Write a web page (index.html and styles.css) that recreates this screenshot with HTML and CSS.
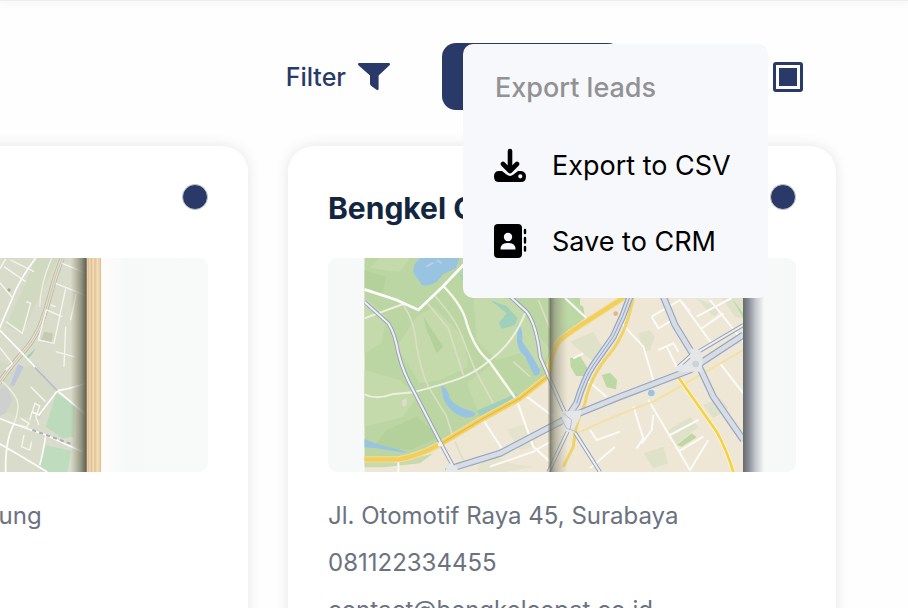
FILE: index.html
```html
<!DOCTYPE html>
<html lang="en">
<head>
  <meta charset="UTF-8">
  <meta name="viewport" content="width=device-width, initial-scale=1.0">
  <title>Leads</title>
  <link rel="stylesheet" href="styles.css">
</head>
<body>

  <header class="topbar"></header>

  <div class="toolbar">
    <button class="filter" type="button">
      Filter
      <svg width="32" height="28" viewBox="0 0 32 28" fill="currentColor" aria-hidden="true">
        <path d="M1 0H31Q32 0 32 1.2Q32 2 31 2.8L20.6 12.4V25.5Q20.6 28 18.6 26.8L13 22.8Q12 22 12 20.8V12.4L1 2.8Q0 2 0 1.2Q0 0 1 0Z"/>
      </svg>
    </button>

    <div class="export">
      <button class="export-button" type="button" aria-label="Export leads"></button>
      <div class="menu">
        <h2 class="menu-title">Export leads</h2>
        <button class="menu-item" type="button">
          <svg width="34" height="36" viewBox="0 0 34 36" aria-hidden="true">
            <path d="M17 3V20M10 16L17 23L24 16" fill="none" stroke="#000" stroke-width="4.6" stroke-linecap="round" stroke-linejoin="round"/>
            <path fill-rule="evenodd" d="M6 23H9L13.5 26.6Q17 29.2 20.5 26.6L25 23H28Q33 23.6 33 28.5Q33 34 28 34H6Q1 34 1 28.5Q1 23 6 23ZM27.3 26.2A2.1 2.1 0 1 0 27.3 30.4A2.1 2.1 0 1 0 27.3 26.2Z"/>
          </svg>
          Export to CSV
        </button>
        <button class="menu-item" type="button">
          <svg width="34" height="36" viewBox="0 0 34 36" aria-hidden="true">
            <rect x="1" y="0" width="28" height="34" rx="4"/>
            <circle cx="15" cy="13" r="4.2" fill="#f7f8fb"/>
            <path d="M7.5 25.5Q7.5 19 14 19H16Q22.5 19 22.5 25.5Z" fill="#f7f8fb"/>
            <path d="M32 6V9M32 14V18.5M32 23V26.5" stroke="#000" stroke-width="2.4" stroke-linecap="round"/>
          </svg>
          Save to CRM
        </button>
      </div>
    </div>

    <input class="select-all" type="checkbox" aria-label="Select all" checked>
  </div>

  <main class="cards">
    <article class="card">
      <div class="card-head">
        <h3 class="card-title"></h3>
        <input class="dot" type="checkbox" aria-label="Select lead" checked>
      </div>
      <svg class="map" viewBox="-777 384 1404 642" preserveAspectRatio="xMaxYMid slice" aria-hidden="true">
        <defs>
          <linearGradient id="fold">
            <stop offset="0" stop-color="#8a8b78" stop-opacity="0"/>
            <stop offset=".45" stop-color="#85866f" stop-opacity=".55"/>
            <stop offset="1" stop-color="#57564b"/>
          </linearGradient>
          <linearGradient id="wall">
            <stop offset="0" stop-color="#fdfcfb"/>
            <stop offset=".25" stop-color="#f7f9f9"/>
            <stop offset="1" stop-color="#f8f9f9"/>
          </linearGradient>
        </defs>
        <rect x="-777" y="384" width="1041" height="642" fill="#d9dcca"/>
        <path d="M110 384H180L120 500L70 610L20 590L75 470Z" fill="#d1d9c1"/>
        <path d="M0 690L60 720L110 700L175 780L120 870L60 860L0 840Z" fill="#d3d9c5"/>
        <path d="M0 780L22 765L40 810L20 850L0 860Z" fill="#ced0d0"/>
        <path d="M172 790L228 825L225 920L190 925L140 890Z" fill="#bedabd"/>
        <path d="M138 945L217 962L205 1026H140L120 1000Z" fill="#bfdcbf"/>
        <path d="M57 702L74 710L45 768L33 766Z" fill="#bfc7dc"/>
        <path d="M78 684L110 655L100 672L84 690Z" fill="#a5ceb1"/>
        <path d="M135 605L162 610L158 637L126 630Z" fill="#c7c9b2"/>
        <circle cx="30" cy="480" r="5" fill="#a9aa94"/>
        <path d="M190 384C140 500 150 590 60 680C40 705 15 735 0 760" fill="none" stroke="#bdb9a2" stroke-width="15"/>
        <path d="M190 384C140 500 150 590 60 680C40 705 15 735 0 760" fill="none" stroke="#e2e0d2" stroke-width="10"/>
        <path d="M190 384C140 500 150 590 60 680C40 705 15 735 0 760" fill="none" stroke="#b9b59e" stroke-width="2"/>
        <path d="M158 384Q125 460 122 530M10 755Q60 800 57 830Q55 860 45 880" fill="none" stroke="#f0efe5" stroke-width="4"/>
        <g fill="none" stroke="#fdfdfb" stroke-width="5">
          <path d="M110 384Q60 450 40 505L0 598L65 665L175 782L262 855"/>
          <path d="M175 782Q220 775 262 758M175 782L120 855L98 845"/>
          <path d="M0 865L45 882L140 915L250 965M45 882Q18 930 20 1026M0 940L60 975L145 1026M140 920Q130 980 122 1005"/>
        </g>
        <g fill="none" stroke="#f6f6f0" stroke-width="4">
          <path d="M0 420L20 387M35 390L105 425M15 410L80 455M0 455L42 505M170 460L262 497M190 400L262 430"/>
          <path d="M200 475L165 640L118 630L142 540L190 560M232 490L215 570M22 575L70 610L95 520L82 515M155 525L170 530"/>
          <path d="M95 770L140 815M0 650L40 700L20 720M75 915L68 950L92 960L98 935M92 870L108 820L122 828L110 860L120 885M65 865L90 880L82 892L62 885"/>
          <path d="M200 590L195 710M170 665L225 680"/>
        </g>
        <path d="M108 712L175 782" stroke="#b9bbc8" stroke-width="6"/>
        <path d="M100 900L225 945" stroke="#a9adba" stroke-width="6" stroke-dasharray="12 10"/>
        <rect x="215" y="384" width="49" height="642" fill="url(#fold)"/>
        <rect x="263" y="384" width="44" height="642" fill="#ecd3ab"/>
        <path d="M268 384V1026M278 384V1026M288 384V1026M304 384V1026" stroke="#e0bd92" stroke-width="3"/>
        <path d="M283 384V1026M296 384V1026" stroke="#f3dfbd" stroke-width="3"/>
        <rect x="307" y="384" width="320" height="642" fill="url(#wall)"/>
      </svg>
      <p class="line">Jl. Asia Afrika 10, Bandung</p>
    </article>

    <article class="card">
      <div class="card-head">
        <h3 class="card-title">Bengkel Cepat</h3>
        <input class="dot" type="checkbox" aria-label="Select lead" checked>
      </div>
      <svg class="map" viewBox="24 24 1404 642" preserveAspectRatio="xMaxYMid slice" aria-hidden="true">
        <defs>
          <linearGradient id="spine">
            <stop offset="0" stop-color="#77775f" stop-opacity=".15"/>
            <stop offset=".12" stop-color="#66655a" stop-opacity=".8"/>
            <stop offset=".35" stop-color="#8b8976" stop-opacity=".55"/>
            <stop offset="1" stop-color="#a8a68d" stop-opacity="0"/>
          </linearGradient>
          <linearGradient id="shade">
            <stop offset="0" stop-color="#666b6c"/>
            <stop offset=".25" stop-color="#878b95"/>
            <stop offset=".6" stop-color="#c6c9cd"/>
            <stop offset="1" stop-color="#f7f9f9"/>
          </linearGradient>
          <clipPath id="sheet"><rect x="133" y="24" width="1137" height="642"/></clipPath>
        </defs>
        <rect x="24" y="24" width="1404" height="642" fill="#f7f9f9"/>
        <g clip-path="url(#sheet)">
          <rect x="133" y="24" width="1137" height="642" fill="#eee7d6"/>
          <path d="M133 24H780V225Q715 260 700 310L685 378L600 440L490 500L360 583Q280 625 235 628H133Z" fill="#bbd6a2"/>
          <g fill="#c5daaa">
            <path d="M133 140L200 200L185 280L133 310ZM230 290L290 200L340 170L430 260L445 350L360 390L300 400ZM460 130L580 150L690 300L650 370L600 310L530 330L470 270Z"/>
            <path d="M133 360L240 390L290 440L250 500L133 530ZM440 400L520 340L590 440L480 500ZM180 24H270L240 65L150 55Z"/>
          </g>
          <path d="M133 60L200 80L185 130L133 115ZM310 200L370 290L350 310L320 240ZM290 500L360 560L270 600L160 590L200 540Z" fill="#b4d19c"/>
          <path d="M133 628L235 638L340 610L300 640L190 652H133Z" fill="#c7d9ad"/>
          <path d="M470 655L510 610L570 640L640 650L560 666H480ZM560 540L620 520L650 590L600 600Z" fill="#e5e3cd"/>
          <path d="M282 45L300 24H418L408 55L370 72L350 96Q320 112 306 105L280 68ZM593 222Q610 230 607 275Q640 320 660 360Q660 380 642 375L615 320Q590 300 591 265ZM363 408Q380 405 390 445Q405 472 462 485Q475 500 438 503Q390 492 370 445ZM133 567L165 580L250 602L262 610L170 595L133 592Z" fill="#98c4e2"/>
          <path d="M536 220L560 190L510 150L560 168L592 205L585 225L545 237ZM470 482L590 430L597 440L480 498ZM415 66L430 80L428 92Z" fill="#a0cfbb"/>
          <path d="M318 50L340 38M350 30L365 40" stroke="#c7cde1" stroke-width="5"/>
          <path d="M728 130L790 170L795 205Q760 235 720 225ZM750 325L780 318L803 355L796 378H768L752 350ZM845 375L870 368L891 390L888 418L860 412Z" fill="#bcd8a4"/>
          <path d="M750 275L820 245L855 305L830 340L800 320ZM955 250L990 240L1005 260L990 300L970 305ZM1045 540L1110 500L1135 530L1060 590ZM1150 465L1200 445L1225 475L1180 505ZM970 610L1030 590L1045 640L1000 655ZM1205 144H1270V205L1245 200ZM1130 144L1200 175L1185 200L1165 185Z" fill="#dfe1c8"/>
          <path d="M1070 585L1115 550L1130 562L1085 590ZM1235 144L1270 190V205Z" fill="#bed8a2"/>

          <!-- footpaths in the park -->
          <g fill="none" stroke="#dcdec6" stroke-width="5">
            <path d="M250 165Q285 215 290 290Q305 370 325 410L380 500L400 565"/>
            <path d="M322 160L385 235L430 375M345 138Q410 210 430 270L465 360L520 460M655 150L690 235"/>
            <path d="M580 335L630 380M405 575L430 630"/>
          </g>
          <g fill="none" stroke="#eeefe3" stroke-width="6">
            <path d="M133 205L250 162M133 433Q170 450 215 433L280 427Q380 400 420 385Q470 365 507 333Q580 280 615 190"/>
          </g>
          <path d="M133 118L230 150L295 180L370 108L450 24" fill="none" stroke="#fff" stroke-width="8"/>
          <path d="M370 108Q430 170 440 220Q465 300 507 333L590 450L640 590L690 635" fill="none" stroke="#fbfbf4" stroke-width="7"/>

          <!-- minor streets -->
          <g fill="none" stroke="#fbfaf8" stroke-width="6">
            <path d="M490 510L555 610M510 650L640 605L700 570M620 440L700 500M235 635V666"/>
            <path d="M905 220L970 290L1000 390M985 450L1110 660L1165 570M1050 555L1135 510M1075 605L1150 560M940 470L970 565L950 595M1000 495L995 540L965 580"/>
            <path d="M735 144L800 205M760 325L790 310M800 390L860 440M810 540L830 570L900 545M885 590L810 655"/>
            <path d="M995 200L1080 150L1110 185M995 200L1015 235L1065 205M1080 150L1175 280M1130 200L1235 144M1145 235L1210 190M1170 150L1270 275M1200 340L1270 430M1015 300L1060 280L1075 305M1070 350L1040 290"/>
          </g>

          <!-- yellow roads -->
          <g fill="none" stroke-linejoin="round">
            <path d="M133 628H235Q290 620 360 583L490 505L600 445L685 378Q695 300 720 270L760 240L900 150L940 120" stroke="#eedda8" stroke-width="19"/>
            <path d="M133 628H235Q290 620 360 583L490 505L600 445L685 378Q695 300 720 270L760 240L900 150L940 120" stroke="#f4cf55" stroke-width="13"/>
            <path d="M360 583L490 505L600 445L685 378" stroke="#e5b343" stroke-width="3"/>
            <path d="M940 140Q920 250 870 310Q810 380 795 460Q765 520 760 590L730 650" stroke="#f1d264" stroke-width="9"/>
            <path d="M775 548Q900 490 1000 455L1150 370L1270 300" stroke="#f3e1a0" stroke-width="6"/>
            <path d="M1070 375L1130 460L1190 545Q1220 600 1240 666" stroke="#fff6c9" stroke-width="13"/>
            <path d="M1070 375L1130 460L1190 545Q1220 600 1240 666" stroke="#f2d14e" stroke-width="8"/>
          </g>

          <!-- main roads -->
          <g fill="none" stroke="#93a5c6" stroke-width="21" stroke-linejoin="round">
            <path d="M380 666L410 650L540 610L740 505L900 440L1110 360L1270 255"/>
            <path d="M740 505L770 460Q795 380 820 345L880 260Q910 200 930 140"/>
            <path d="M1030 140L1065 225L1120 315L1145 365L1180 440L1270 570"/>
          </g>
          <g fill="none" stroke="#d8dce3" stroke-width="14" stroke-linejoin="round">
            <path d="M380 666L410 650L540 610L740 505L900 440L1110 360L1270 255"/>
            <path d="M740 505L770 460Q795 380 820 345L880 260Q910 200 930 140"/>
            <path d="M1030 140L1065 225L1120 315L1145 365L1180 440L1270 570"/>
          </g>
          <path d="M770 460Q795 380 820 345L880 260Q910 200 930 140" fill="none" stroke="#93a5c6" stroke-width="3"/>
          <g fill="none" stroke="#98a3bb" stroke-width="12">
            <path d="M133 155L205 220Q225 250 235 310Q250 370 283 427L365 585L400 650M560 130L620 185Q650 225 660 320L685 378L740 500M745 540L685 666M765 548L840 666"/>
            <path d="M1110 320L1270 225M1075 350L1120 310"/>
          </g>
          <g fill="none" stroke="#eef0f2" stroke-width="6">
            <path d="M133 155L205 220Q225 250 235 310Q250 370 283 427L365 585L400 650M560 130L620 185Q650 225 660 320L685 378L740 500M745 540L685 666M765 548L840 666"/>
            <path d="M1110 320L1270 225M1075 350L1120 310"/>
          </g>
          <path d="M385 640L410 648L415 666H375ZM725 485L785 480L780 505L755 550L730 540ZM1112 295L1140 300L1148 325L1145 365L1115 365L1075 365L1070 348L1110 340Z" fill="#e4e6e8"/>
          <path d="M720 500L740 535L770 545M730 490L755 510L750 540" fill="none" stroke="#b4bccb" stroke-width="3"/>
          <circle cx="1127" cy="342" r="10" fill="#ccd2db"/>
          <circle cx="360" cy="583" r="7" fill="#f4f3ee"/>
          <circle cx="994" cy="429" r="10" fill="#98c4e2"/>
          <circle cx="887" cy="191" r="7" fill="#e6b587"/>
          <path d="M245 450L262 445L258 470L248 468Z" fill="#dcdccb"/>
          <rect x="684" y="24" width="60" height="642" fill="url(#spine)"/>
        </g>
        <rect x="1269" y="24" width="64" height="642" fill="url(#shade)"/>
      </svg>
      <p class="line">Jl. Otomotif Raya 45, Surabaya</p>
      <p class="line">081122334455</p>
      <p class="line">contact@bengkelcepat.co.id</p>
    </article>
  </main>

</body>
</html>
```

FILE: styles.css
```css
body {
  font-family: Inter, 'Liberation Sans', sans-serif;
  margin: 0;
  height: 100vh;
  overflow: hidden;
  background-color: #fefefe;
}

button {
  font-family: inherit;
  padding: 0;
  border: none;
  background: none;
  cursor: pointer;
}

.topbar {
  height: 1px;
  background-color: #eceeee;
  box-shadow: 0 0 8px rgba(0, 0, 0, 0.24);
}

.toolbar {
  display: flex;
  justify-content: flex-end;
  align-items: center;
  padding: 42px 105px 36px 0;
}

.filter {
  display: flex;
  align-items: center;
  gap: 12px;
  margin-right: 52px;
  font-size: 25px;
  font-weight: 500;
  color: #2a3a68;
}

.export {
  position: relative;
  margin-right: 145px;
}

.export-button {
  display: block;
  width: 180px;
  height: 67px;
  margin-right: 6px;
  border-radius: 14px;
  background-color: #2a3a68;
}

.menu {
  position: absolute;
  top: 1px;
  left: 21px;
  z-index: 1;
  box-sizing: border-box;
  width: 305px;
  padding: 24px 30px 38px;
  border-radius: 10px;
  background-color: #f7f8fb;
}

.menu-title {
  margin: 0 0 40px 2px;
  font-size: 27px;
  line-height: 40px;
  font-weight: 500;
  color: #929294;
}

.menu-item {
  display: flex;
  align-items: center;
  gap: 25px;
  font-size: 27px;
  line-height: 36px;
  white-space: nowrap;
  color: #000;
}

.menu-item + .menu-item {
  margin-top: 40px;
}

.select-all {
  appearance: none;
  box-sizing: border-box;
  width: 30px;
  height: 30px;
  margin: 0;
  padding: 3px;
  border: 3px solid #2a3a68;
  border-radius: 3px;
}

.select-all:checked {
  background: #2a3a68 content-box;
}

/* the row starts left of the window, so the first card is cut off */
.cards {
  display: grid;
  grid-template-columns: 1fr 1fr;
  gap: 40px;
  margin: 0 72px 0 -300px;
}

.card {
  padding: 38px 40px 40px;
  border-radius: 26px;
  background-color: #fff;
  box-shadow: 0 0 14px rgba(0, 20, 15, 0.1);
}

.card-head {
  display: flex;
  justify-content: space-between;
  align-items: flex-start;
  height: 74px;
}

.card-title {
  margin: 6px 0 0;
  font-size: 30px;
  line-height: 36px;
  font-weight: 700;
  color: #12263f;
}

.dot {
  appearance: none;
  box-sizing: border-box;
  width: 26px;
  height: 26px;
  margin: 0;
  border: 1px solid #c4c8c8;
  border-radius: 50%;
}

.dot:checked {
  background-color: #2a3a68;
}

.map {
  display: block;
  width: 100%;
  height: 214px;
  margin-bottom: 20px;
  border-radius: 9px;
}

.line {
  margin: 0;
  font-size: 24px;
  line-height: 47px;
  white-space: nowrap;
  color: #6b7280;
}
```
